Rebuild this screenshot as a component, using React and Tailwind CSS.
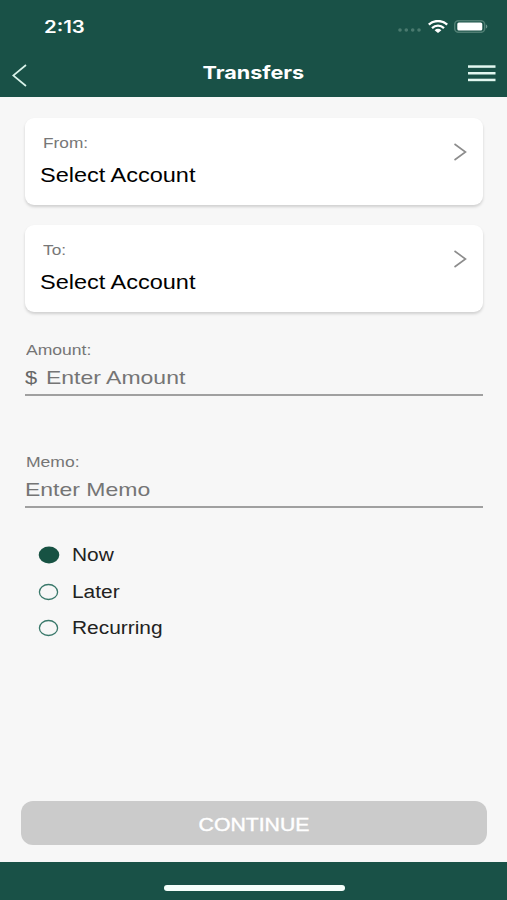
import { useState } from 'react';

const SCHEDULES = ['Now', 'Later', 'Recurring'];

function StatusBar() {
  return (
    <div className="flex h-[53px] items-center justify-between pl-11 pr-[19px] text-white">
      <span className="origin-left scale-x-[1.2] font-['Inter',sans-serif] text-[17px] font-semibold leading-5">2:13</span>
      <div className="flex items-center">
        <svg width="24" height="4" viewBox="0 0 24 4" className="mr-[6px] mt-1.5" fill="#4a7a6f">
          <circle cx="2" cy="2" r="1.8" />
          <circle cx="8.3" cy="2" r="1.8" />
          <circle cx="14.7" cy="2" r="1.8" />
          <circle cx="21" cy="2" r="1.8" />
        </svg>
        <svg width="20" height="13" viewBox="0 0 20 13" fill="none" stroke="white">
          <path d="M0.8 4.7C6 -0.1 14 -0.1 19.2 4.7" strokeWidth="2.5" />
          <path d="M4 8.1C7.5 4.9 12.5 4.9 16 8.1" strokeWidth="2.3" />
          <path d="M6.6 10.2C8.6 8.4 11.4 8.4 13.4 10.2L10 13Z" fill="white" stroke="none" />
        </svg>
        <svg width="34" height="13" viewBox="0 0 34 13" className="ml-[6px]">
          <rect x="0.7" y="0.7" width="30" height="11.6" rx="3.8" fill="none" stroke="#4f7e73" strokeWidth="1.5" />
          <rect x="3.3" y="2.4" width="25" height="8.2" rx="1.6" fill="white" />
          <path d="M32 4.5C33.8 5.3 33.8 7.7 32 8.5Z" fill="#6f968d" />
        </svg>
      </div>
    </div>
  );
}

function AccountCard({ label }) {
  return (
    <button className="flex h-[87px] w-full justify-between rounded-[9px] bg-white pl-[15px] pr-4 pt-[15px] text-left shadow-[0_2px_3px_rgba(0,0,0,0.16)]">
      <div className="flex flex-col items-start">
        <span className="ml-[3px] origin-left scale-x-[1.19] text-[14.5px] leading-5 text-[#777]">{label}</span>
        <span className="mt-2.5 origin-left scale-x-[1.205] text-[19.5px] leading-6 text-black">Select Account</span>
      </div>
      <svg width="13" height="18" viewBox="0 0 13 18" className="mt-2.5" fill="none" stroke="#8c8c8c" strokeWidth="1.6">
        <path d="M0.5 1L11.5 9L0.5 17" />
      </svg>
    </button>
  );
}

function Field({ label, prefix, placeholder }) {
  return (
    <label className="flex h-[56px] flex-col border-b-2 border-[#a0a0a0] text-[#757575]">
      <span className="ml-[0.5px] origin-left scale-x-[1.21] self-start text-[14.5px] leading-5">{label}</span>
      <div className="mt-1.5 flex items-center text-[19px] leading-6">
        {prefix && <span className="w-[20.5px] origin-left scale-x-[1.15] text-[#666]">{prefix}</span>}
        <input
          type="text"
          placeholder={placeholder}
          className="w-[340px] origin-left scale-x-[1.21] bg-transparent outline-none placeholder:text-[#757575]"
        />
      </div>
    </label>
  );
}

export default function App() {
  const [schedule, setSchedule] = useState('Now');

  return (
    <div className="flex h-[900px] w-[507px] flex-col overflow-hidden bg-[#f7f7f7] font-['Liberation_Sans',Arial,sans-serif]">
      {/* Header */}
      <header className="h-[97px] bg-[#195147]">
        <StatusBar />
        <div className="flex h-10 items-center justify-between pl-3 pr-[11px] text-white">
          <svg width="15" height="23" viewBox="0 0 15 23" className="mt-1" fill="none" stroke="#d9f3ea" strokeWidth="1.7">
            <path d="M14 1L1.2 11.5L14 22" />
          </svg>
          <h1 className="ml-3 scale-x-[1.2] font-['Inter',sans-serif] text-[18px] font-bold leading-6">Transfers</h1>
          <svg width="28" height="17" viewBox="0 0 28 17" fill="#e2f7f0">
            <rect y="0.3" width="27.5" height="2.5" />
            <rect y="7" width="27.5" height="2.5" />
            <rect y="13.7" width="27.5" height="2.5" />
          </svg>
        </div>
      </header>

      {/* Transfer form */}
      <main className="flex flex-1 flex-col pl-[25px] pr-6 pt-[21px]">
        <div className="flex flex-col gap-5">
          <AccountCard label="From:" />
          <AccountCard label="To:" />
        </div>

        <div className="mt-7 flex flex-col gap-14">
          <Field label="Amount:" prefix="$" placeholder="Enter Amount" />
          <Field label="Memo:" placeholder="Enter Memo" />
        </div>

        <div className="ml-[13px] mt-[35px] flex flex-col gap-[12.5px]">
          {SCHEDULES.map((name) => (
            <button key={name} onClick={() => setSchedule(name)} className="flex h-6 items-center text-left">
              <svg width="22" height="18" viewBox="0 0 22 18">
                {schedule === name ? (
                  <ellipse cx="11" cy="9" rx="10.3" ry="8.4" fill="#175243" />
                ) : (
                  <ellipse cx="10.5" cy="9" rx="9.1" ry="7.5" fill="none" stroke="#39786a" strokeWidth="1.3" />
                )}
              </svg>
              <span className="ml-3 origin-left scale-x-[1.16] text-[18px] leading-6 text-[#222]">{name}</span>
            </button>
          ))}
        </div>
      </main>

      {/* Footer */}
      <button className="ml-[21px] mr-5 mb-[17px] flex h-11 items-center justify-center rounded-xl bg-[#cbcbcb]">
        <span className="mt-1 scale-x-[1.18] text-[18px] font-normal text-white [-webkit-text-stroke:0.4px_white]">CONTINUE</span>
      </button>
      <div className="flex h-[38px] justify-center bg-[#195147] pt-[23px]">
        <div className="ml-px h-1.5 w-[181px] rounded-full bg-[#f5fffb]" />
      </div>
    </div>
  );
}
